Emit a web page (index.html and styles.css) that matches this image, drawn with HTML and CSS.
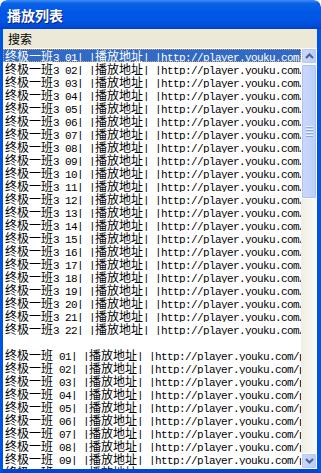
FILE: index.html
```html
<!DOCTYPE html>
<html lang="zh">
<head>
<meta charset="utf-8">
<title>播放列表</title>
<link rel="stylesheet" href="styles.css">
</head>
<body>
<div class="window">
  <div class="titlebar"><span class="title">播放列表</span></div>
  <div class="frame">
    <div class="menubar"><span class="menu">搜索</span></div>
    <div class="content">
      <div class="list">
        <div class="row sel"><span class="c">终极一班</span>3 01| |<span class="c">播放地址</span>| |http://player.youku.com/player.php</div>
        <div class="row"><span class="c">终极一班</span>3 02| |<span class="c">播放地址</span>| |http://player.youku.com/player.php</div>
        <div class="row"><span class="c">终极一班</span>3 03| |<span class="c">播放地址</span>| |http://player.youku.com/player.php</div>
        <div class="row"><span class="c">终极一班</span>3 04| |<span class="c">播放地址</span>| |http://player.youku.com/player.php</div>
        <div class="row"><span class="c">终极一班</span>3 05| |<span class="c">播放地址</span>| |http://player.youku.com/player.php</div>
        <div class="row"><span class="c">终极一班</span>3 06| |<span class="c">播放地址</span>| |http://player.youku.com/player.php</div>
        <div class="row"><span class="c">终极一班</span>3 07| |<span class="c">播放地址</span>| |http://player.youku.com/player.php</div>
        <div class="row"><span class="c">终极一班</span>3 08| |<span class="c">播放地址</span>| |http://player.youku.com/player.php</div>
        <div class="row"><span class="c">终极一班</span>3 09| |<span class="c">播放地址</span>| |http://player.youku.com/player.php</div>
        <div class="row"><span class="c">终极一班</span>3 10| |<span class="c">播放地址</span>| |http://player.youku.com/player.php</div>
        <div class="row"><span class="c">终极一班</span>3 11| |<span class="c">播放地址</span>| |http://player.youku.com/player.php</div>
        <div class="row"><span class="c">终极一班</span>3 12| |<span class="c">播放地址</span>| |http://player.youku.com/player.php</div>
        <div class="row"><span class="c">终极一班</span>3 13| |<span class="c">播放地址</span>| |http://player.youku.com/player.php</div>
        <div class="row"><span class="c">终极一班</span>3 14| |<span class="c">播放地址</span>| |http://player.youku.com/player.php</div>
        <div class="row"><span class="c">终极一班</span>3 15| |<span class="c">播放地址</span>| |http://player.youku.com/player.php</div>
        <div class="row"><span class="c">终极一班</span>3 16| |<span class="c">播放地址</span>| |http://player.youku.com/player.php</div>
        <div class="row"><span class="c">终极一班</span>3 17| |<span class="c">播放地址</span>| |http://player.youku.com/player.php</div>
        <div class="row"><span class="c">终极一班</span>3 18| |<span class="c">播放地址</span>| |http://player.youku.com/player.php</div>
        <div class="row"><span class="c">终极一班</span>3 19| |<span class="c">播放地址</span>| |http://player.youku.com/player.php</div>
        <div class="row"><span class="c">终极一班</span>3 20| |<span class="c">播放地址</span>| |http://player.youku.com/player.php</div>
        <div class="row"><span class="c">终极一班</span>3 21| |<span class="c">播放地址</span>| |http://player.youku.com/player.php</div>
        <div class="row"><span class="c">终极一班</span>3 22| |<span class="c">播放地址</span>| |http://player.youku.com/player.php</div>
        <div class="row"></div>
        <div class="row"><span class="c">终极一班</span> 01| |<span class="c">播放地址</span>| |http://player.youku.com/player.php</div>
        <div class="row"><span class="c">终极一班</span> 02| |<span class="c">播放地址</span>| |http://player.youku.com/player.php</div>
        <div class="row"><span class="c">终极一班</span> 03| |<span class="c">播放地址</span>| |http://player.youku.com/player.php</div>
        <div class="row"><span class="c">终极一班</span> 04| |<span class="c">播放地址</span>| |http://player.youku.com/player.php</div>
        <div class="row"><span class="c">终极一班</span> 05| |<span class="c">播放地址</span>| |http://player.youku.com/player.php</div>
        <div class="row"><span class="c">终极一班</span> 06| |<span class="c">播放地址</span>| |http://player.youku.com/player.php</div>
        <div class="row"><span class="c">终极一班</span> 07| |<span class="c">播放地址</span>| |http://player.youku.com/player.php</div>
        <div class="row"><span class="c">终极一班</span> 08| |<span class="c">播放地址</span>| |http://player.youku.com/player.php</div>
        <div class="row"><span class="c">终极一班</span> 09| |<span class="c">播放地址</span>| |http://player.youku.com/player.php</div>
        <div class="row"><span class="c">终极一班</span> 10| |<span class="c">播放地址</span>| |http://player.youku.com/player.php</div>
      </div>
      <div class="scrollbar">
        <div class="sbtn">
          <svg width="9" height="6" viewBox="0 0 9 6"><path d="M1 5 L4.5 1.5 L8 5" fill="none" stroke="#4d6185" stroke-width="2"/></svg>
        </div>
        <div class="track">
          <div class="thumb">
            <span class="grip"></span><span class="grip"></span><span class="grip"></span><span class="grip"></span>
          </div>
        </div>
        <div class="sbtn">
          <svg width="9" height="6" viewBox="0 0 9 6"><path d="M1 1 L4.5 4.5 L8 1" fill="none" stroke="#4d6185" stroke-width="2"/></svg>
        </div>
      </div>
    </div>
  </div>
</div>
</body>
</html>
```

FILE: styles.css
```css
html, body {
  margin: 0;
  padding: 0;
  background: #ffffff;
}

.window {
  width: 321px;
  height: 473px;
  display: flex;
  flex-direction: column;
  overflow: hidden;
  border-radius: 7px 7px 0 0;
}

.titlebar {
  height: 29px;
  flex: none;
  display: flex;
  align-items: center;
  padding-left: 7px;
  background: linear-gradient(to bottom, #3d8cf5 0%, #0a62e8 12%, #0058e6 40%, #0054e3 75%, #0049d6 92%, #003fc0 100%);
  border-radius: 7px 7px 0 0;
}

.title {
  color: #ffffff;
  font-family: "Noto Sans CJK SC", sans-serif;
  font-weight: bold;
  font-size: 14px;
  line-height: 15px;
  text-shadow: 1px 1px 0 #0a1e80;
  margin-top: 1px;
}

.frame {
  flex: 1;
  display: flex;
  flex-direction: column;
  min-height: 0;
  border-left: 3px solid #0054e3;
  border-right: 4px solid #0054e3;
  border-bottom: 4px solid #0047cc;
}

.menubar {
  height: 19px;
  flex: none;
  background: #ece9d8;
  display: flex;
  align-items: center;
  padding-left: 5px;
}

.menu {
  font-family: "Noto Sans CJK SC", sans-serif;
  font-size: 12px;
  line-height: 14px;
  color: #000000;
}

.content {
  flex: 1;
  display: flex;
  min-height: 0;
  background: #ffffff;
}

.list {
  flex: 1;
  min-width: 0;
  overflow: hidden;
  padding-top: 1px;
}

.row {
  height: 13px;
  line-height: 13px;
  white-space: pre;
  overflow: hidden;
  padding-left: 2px;
  font-family: "Liberation Mono", monospace;
  font-size: 11px;
  letter-spacing: -0.6px;
  color: #000000;
}

.row .c {
  font-family: "Noto Sans CJK SC", sans-serif;
  font-size: 12px;
  letter-spacing: 0;
}

.row.sel {
  background: #316ac5;
  color: #ffffff;
  outline: 1px dotted #d8a860;
  outline-offset: -1px;
}

.scrollbar {
  width: 16px;
  flex: none;
  display: flex;
  flex-direction: column;
  background: #f4f3ee;
}

.sbtn {
  height: 16px;
  flex: none;
  box-sizing: border-box;
  border: 1px solid #ffffff;
  border-radius: 2px;
  background: linear-gradient(to right, #c9d8fc, #b9ccf6);
  box-shadow: inset 0 0 0 1px #b4c8f3;
  display: flex;
  align-items: center;
  justify-content: center;
}

.track {
  flex: 1;
  display: flex;
  flex-direction: column;
  background: linear-gradient(to right, #eeede5, #fbfbf8);
}

.thumb {
  height: 135px;
  box-sizing: border-box;
  border: 1px solid #ffffff;
  border-radius: 2px;
  background: linear-gradient(to right, #cad9fd, #bccff7);
  box-shadow: inset 0 0 0 1px #aec3f2;
  display: flex;
  flex-direction: column;
  align-items: center;
  justify-content: center;
  gap: 1px;
}

.grip {
  width: 7px;
  height: 1px;
  background: #eef3ff;
  box-shadow: 0 1px 0 #8ca6e6;
  margin-bottom: 1px;
}
```
